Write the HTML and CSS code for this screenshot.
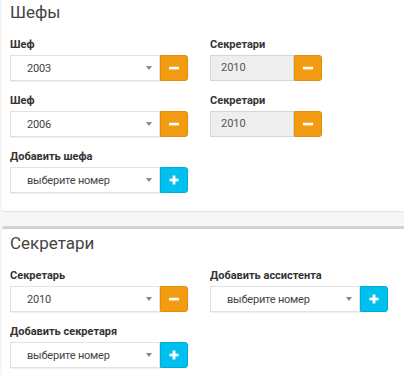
FILE: index.html
```html
<!DOCTYPE html>
<html lang="ru">
<head>
    <meta charset="UTF-8">
    <title>Шефы и секретари</title>
    <link rel="stylesheet" href="styles.css">
</head>
<body>
    <!-- Шефы -->
    <div class="box box-first">
        <h3 class="box-title">Шефы</h3>
        <div class="form-grid">
            <div class="form-group">
                <label>Шеф</label>
                <div class="input-group">
                    <div class="select"><span>2003</span><i class="caret"></i></div>
                    <button class="btn btn-warning"><svg width="10" height="10" viewBox="0 0 10 10"><rect x="0" y="3.8" width="10" height="2.6" fill="#fff"/></svg></button>
                </div>
            </div>
            <div class="form-group">
                <label>Секретари</label>
                <div class="input-group">
                    <div class="input-disabled">2010</div>
                    <button class="btn btn-warning"><svg width="10" height="10" viewBox="0 0 10 10"><rect x="0" y="3.8" width="10" height="2.6" fill="#fff"/></svg></button>
                </div>
            </div>
            <div class="form-group">
                <label>Шеф</label>
                <div class="input-group">
                    <div class="select"><span>2006</span><i class="caret"></i></div>
                    <button class="btn btn-warning"><svg width="10" height="10" viewBox="0 0 10 10"><rect x="0" y="3.8" width="10" height="2.6" fill="#fff"/></svg></button>
                </div>
            </div>
            <div class="form-group">
                <label>Секретари</label>
                <div class="input-group">
                    <div class="input-disabled">2010</div>
                    <button class="btn btn-warning"><svg width="10" height="10" viewBox="0 0 10 10"><rect x="0" y="3.8" width="10" height="2.6" fill="#fff"/></svg></button>
                </div>
            </div>
            <div class="form-group">
                <label>Добавить шефа</label>
                <div class="input-group">
                    <div class="select"><span>выберите номер</span><i class="caret"></i></div>
                    <button class="btn btn-info"><svg width="10" height="10" viewBox="0 0 10 10"><rect x="0.5" y="3.6" width="9" height="2.8" fill="#fff"/><rect x="3.6" y="0.5" width="2.8" height="9" fill="#fff"/></svg></button>
                </div>
            </div>
        </div>
    </div>

    <!-- Секретари -->
    <div class="box">
        <h3 class="box-title">Секретари</h3>
        <div class="form-grid">
            <div class="form-group">
                <label>Секретарь</label>
                <div class="input-group">
                    <div class="select"><span>2010</span><i class="caret"></i></div>
                    <button class="btn btn-warning"><svg width="10" height="10" viewBox="0 0 10 10"><rect x="0" y="3.8" width="10" height="2.6" fill="#fff"/></svg></button>
                </div>
            </div>
            <div class="form-group">
                <label>Добавить ассистента</label>
                <div class="input-group">
                    <div class="select"><span>выберите номер</span><i class="caret"></i></div>
                    <button class="btn btn-info"><svg width="10" height="10" viewBox="0 0 10 10"><rect x="0.5" y="3.6" width="9" height="2.8" fill="#fff"/><rect x="3.6" y="0.5" width="2.8" height="9" fill="#fff"/></svg></button>
                </div>
            </div>
            <div class="form-group">
                <label>Добавить секретаря</label>
                <div class="input-group">
                    <div class="select"><span>выберите номер</span><i class="caret"></i></div>
                    <button class="btn btn-info"><svg width="10" height="10" viewBox="0 0 10 10"><rect x="0.5" y="3.6" width="9" height="2.8" fill="#fff"/><rect x="3.6" y="0.5" width="2.8" height="9" fill="#fff"/></svg></button>
                </div>
            </div>
        </div>
    </div>
</body>
</html>
```

FILE: styles.css
```css
/* Page */
body {
    margin: 0;
    background: #f6f6f6;
    font-family: Roboto, "Noto Sans", sans-serif;
    color: #333;
    overflow: hidden;
}

/* Panels */
.box {
    background: #fff;
    border-top: 3px solid #d0d2d6;
    border-radius: 3px;
    box-shadow: 0 1px 1px rgba(0, 0, 0, 0.08);
    margin: 15px -10px 0 2px;
    padding: 4px 8px 6px 8px;
}

.box-first {
    margin-top: -5px;
}

.box-title {
    margin: 0 0 15px 0;
    font-size: 17px;
    line-height: 20px;
    font-weight: 400;
    color: #444;
}

/* Two columns of fields */
.form-grid {
    display: grid;
    grid-template-columns: 200px 200px;
}

.form-group {
    margin-bottom: 12px;
}

.form-group label {
    display: block;
    font-size: 11px;
    line-height: 15px;
    font-weight: 700;
    margin-bottom: 3px;
}

.input-group {
    display: flex;
    height: 26px;
}

/* Select look-alike */
.select {
    box-sizing: border-box;
    display: flex;
    align-items: center;
    justify-content: space-between;
    width: 150px;
    height: 26px;
    border: 1px solid #e2e2e2;
    box-shadow: 0 1px 1px rgba(0, 0, 0, 0.06);
    padding: 0 7px 0 16px;
    font-size: 11px;
    letter-spacing: -0.2px;
    color: #444;
    background: #fff;
}

.caret {
    width: 0;
    height: 0;
    border-left: 3px solid transparent;
    border-right: 3px solid transparent;
    border-top: 4px solid #888;
}

/* Disabled input */
.input-disabled {
    box-sizing: border-box;
    width: 84px;
    height: 26px;
    border: 1px solid #d2d6de;
    background: #eee;
    padding-left: 10px;
    font-size: 11px;
    line-height: 24px;
    color: #555;
}

/* Buttons */
.btn {
    box-sizing: border-box;
    width: 28px;
    height: 26px;
    padding: 0;
    border: 1px solid;
    border-radius: 0 3px 3px 0;
    display: flex;
    align-items: center;
    justify-content: center;
    cursor: pointer;
}

.btn-warning {
    background: #f39c12;
    border-color: #e08e0b;
}

.btn-info {
    background: #00c0ef;
    border-color: #00acd6;
}
```
